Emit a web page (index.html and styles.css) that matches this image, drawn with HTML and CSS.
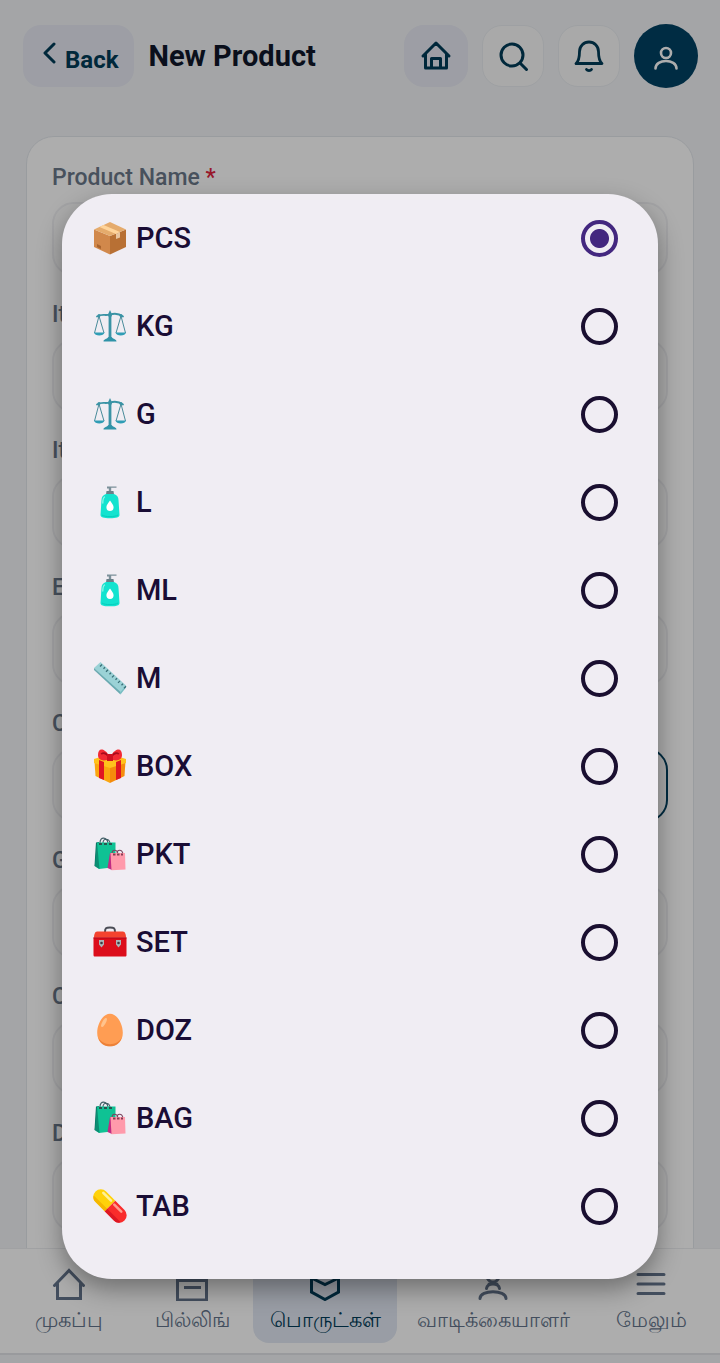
FILE: index.html
```html
<!DOCTYPE html>
<html lang="en">
<head>
<meta charset="utf-8">
<meta name="viewport" content="width=device-width, initial-scale=1">
<title>New Product</title>
<link rel="stylesheet" href="styles.css">
</head>
<body>
<svg class="defs" aria-hidden="true">
  <symbol id="scales" viewBox="0 0 34 34">
    <path d="M4 7.500C9 4.500 12 7 17 5.500S26 4.500 30 7.500" fill="none" stroke="#3a93a5" stroke-width="1.800" stroke-linecap="round"/>
    <path d="M6 7 1.500 24M6 7l5 17M28 7l-5 17M28 7l4.500 17" stroke="#498b9a" stroke-width="1" fill="none"/>
    <circle cx="6" cy="6.500" r="1.500" fill="#3a93a5"/><circle cx="28" cy="6.500" r="1.500" fill="#3a93a5"/>
    <path d="M1 23.500h10.500c-.5 4-10 4-10.500 0zM22.500 23.500H33c-.5 4-10 4-10.500 0z" fill="#2f9db5"/>
    <path d="M15.600 4 17 1l1.400 3v25h-2.800z" fill="#3a93a5"/><circle cx="17" cy="6" r="2" fill="#3a93a5"/>
    <path d="M10.500 32.500c0-2.500 3-2 5-4.500h3c2 2.500 5 2 5 4.500z" fill="#2f93a8"/>
  </symbol>
  <symbol id="bottle" viewBox="0 0 34 34">
    <path d="M14 1.500h9.500v1.300h-5.300V6h-2.400V3.500H14z" fill="#7b9099"/>
    <path d="M13.500 6h7l.5 3.500h-8z" fill="#698089"/>
    <path d="M13 9h8c3 1 4.500 3 4.500 6l1 15c.1 2.500-3 3.300-9.500 3.300S7.400 32.500 7.500 30l1-15c0-3 1.500-5 4.500-6z" fill="#13e3cf"/>
    <path d="M9 30c3 2.200 13 2.200 16 0" stroke="#06cdbb" stroke-width="1" fill="none"/>
    <path d="M11.500 12c-1.500 1-1.700 3-1.700 6" stroke="#8ff5e9" stroke-width="1.300" fill="none" stroke-linecap="round"/>
    <path d="M17 15.500c2 3 3.600 4.600 3.600 6.800a3.600 3.600 0 0 1-7.200 0c0-2.200 1.600-3.800 3.600-6.800z" fill="#fff"/>
  </symbol>
  <symbol id="bags" viewBox="0 0 34 34">
    <path d="M7 6c0-7 7-6 8 0M10 6c0-5 6-5 7 0" fill="none" stroke="#436068" stroke-width="1.200"/>
    <path d="M3 5.500 6 5v26l-4.500-2z" fill="#09705f"/>
    <path d="M4 5.500h18.500V30L6 32l-3-2z" fill="#0fc294"/>
    <path d="M4 5.500 6.500 32 1.800 29z" fill="#0c8d73"/>
    <path d="M6 7h14" stroke="#29554f" stroke-width="2" stroke-dasharray="3 2"/>
    <path d="M19 17c0-5 5-5 6 0M24 17c0-5 5-5 6 0" fill="none" stroke="#7b4660" stroke-width="1.200"/>
    <path d="m17 16-2.500 15 4.500 2V16z" fill="#c02b82"/>
    <path d="M17.500 16H32l.5 16.500-14 .8z" fill="#ff9aab"/>
    <path d="M20 17.500h10" stroke="#853c52" stroke-width="1.800" stroke-dasharray="2.500 1.500"/>
  </symbol>
</svg>

<div class="screen">
  <header class="topbar">
    <button class="back" type="button">
      <svg width="24" height="36" viewBox="0 0 24 36" fill="none" stroke="currentColor" stroke-width="3" stroke-linecap="round" stroke-linejoin="round" aria-hidden="true"><path d="M17 2 8 11l9 9"/></svg>
      Back
    </button>
    <h1 class="title">New Product</h1>
    <button class="tool tool-tint" type="button" aria-label="Home">
      <svg width="32" height="32" viewBox="0 0 32 32" fill="none" stroke="currentColor" stroke-width="3" stroke-linecap="round" stroke-linejoin="round"><path d="M3 16 16 3l13 13M5.500 14v14h21V14M11.500 28v-9.500h9V28"/></svg>
    </button>
    <button class="tool" type="button" aria-label="Search">
      <svg width="32" height="32" viewBox="0 0 32 32" fill="none" stroke="currentColor" stroke-width="3" stroke-linecap="round"><circle cx="15" cy="15" r="11"/><path d="m23 23 6.500 6.500"/></svg>
    </button>
    <button class="tool" type="button" aria-label="Notifications">
      <svg width="32" height="32" viewBox="0 0 32 32" fill="none" stroke="currentColor" stroke-width="2.800" stroke-linecap="round" stroke-linejoin="round"><path d="M3 23.500h26c-3-2.500-3.500-6-3.500-12a9.500 9.500 0 0 0-19 0c0 6-.5 9.500-3.500 12zM13.500 29.500c1 1.400 4 1.400 5 0"/></svg>
    </button>
    <button class="avatar" type="button" aria-label="Account">
      <svg width="32" height="32" viewBox="0 0 32 32" fill="none" stroke="currentColor" stroke-width="2.600" stroke-linecap="round"><circle cx="16" cy="13" r="5"/><path d="M5.500 28.500c0-10 21-10 21 0"/></svg>
    </button>
  </header>

  <main class="content">
    <form class="card">
      <div class="field"><label for="f1">Product Name <span class="req">*</span></label><input id="f1" type="text"></div>
      <div class="field"><label for="f2">It</label><input id="f2" type="text"></div>
      <div class="field"><label for="f3">It</label><input id="f3" type="text"></div>
      <div class="field"><label for="f4">E</label><input id="f4" type="text"></div>
      <div class="field"><label for="f5">C</label>
        <div class="pair"><input id="f5" type="text"><input class="active" type="text" aria-label="Unit"></div></div>
      <div class="field"><label for="f6">G</label><input id="f6" type="text"></div>
      <div class="field"><label for="f7">C</label><input id="f7" type="text"></div>
      <div class="field"><label for="f8">D</label><input id="f8" type="text"></div>
    </form>
  </main>

  <nav class="tabs" lang="ta">
    <a class="tab" href="#home">
      <svg width="34" height="34" viewBox="0 0 34 34" fill="none" stroke="currentColor" stroke-width="3" stroke-linecap="round"><path d="M2.500 18.500 17 3.500l14.500 15M5.500 16.500v15h23v-15"/></svg>
      <span>முகப்பு</span></a>
    <a class="tab" href="#billing">
      <svg width="34" height="34" viewBox="0 0 34 34" fill="none" stroke="currentColor" stroke-width="3"><path d="M2.500 4h29v29h-29zM2 13.500h30M9 20.500h17"/></svg>
      <span>பில்லிங்</span></a>
    <a class="tab current" href="#products" aria-current="page">
      <svg width="34" height="34" viewBox="0 0 34 34" fill="none" stroke="currentColor" stroke-width="3"><path d="m17 1 13.500 7v17L17 32.500 3.500 25V8zM3.500 11 17 17.500 30.500 11"/></svg>
      <span>பொருட்கள்</span></a>
    <a class="tab" href="#customers">
      <svg width="34" height="34" viewBox="0 0 34 34" fill="none" stroke="currentColor" stroke-width="3" stroke-linecap="round"><circle cx="17" cy="9" r="6"/><path d="M10.500 21.500c1-6 12-6 13 0M4 31.500c0-9 26-9 26 0M13 17h8"/></svg>
      <span>வாடிக்கையாளர்</span></a>
    <a class="tab" href="#more">
      <svg width="34" height="34" viewBox="0 0 34 34" fill="none" stroke="currentColor" stroke-width="3" stroke-linecap="round"><path d="M4 7.500h26M4 17h26M4 26.500h26"/></svg>
      <span>மேலும்</span></a>
  </nav>
</div>

<div class="scrim">
  <div class="dialog" role="dialog" aria-modal="true" aria-label="Unit">
    <label class="option">
      <svg class="glyph" viewBox="0 0 34 34"><path d="M1 8.500 17 15v18.500L1 26z" fill="#d1884b"/><path d="M33 8.500 17 15v18.500L33 26z" fill="#b87034"/><path d="M1 8.500 17 1l16 7.500L17 15z" fill="#e5ab6c"/><path d="m6.500 6 4-2L27 11l-4 2z" fill="#ffd49a"/><path d="m23 13 4-2v5.500L23 18z" fill="#e8c5a0"/><path d="m4 23 4 2v3l-4-2z" fill="#a9632d"/></svg>
      <span>PCS</span><input type="radio" name="unit" checked></label>
    <label class="option"><svg class="glyph"><use href="#scales"/></svg><span>KG</span><input type="radio" name="unit"></label>
    <label class="option"><svg class="glyph"><use href="#scales"/></svg><span>G</span><input type="radio" name="unit"></label>
    <label class="option"><svg class="glyph"><use href="#bottle"/></svg><span>L</span><input type="radio" name="unit"></label>
    <label class="option"><svg class="glyph"><use href="#bottle"/></svg><span>ML</span><input type="radio" name="unit"></label>
    <label class="option">
      <svg class="glyph" viewBox="0 0 34 34"><path d="M1 7 7.500 1 33 24.500 27.500 33z" fill="#9bd2d6"/><path d="m1 7 26.500 24v2.500L1 9z" fill="#69a9b0"/><path d="m27.500 31 5.500-6.500v2l-5.500 7z" fill="#78bdc3"/><path d="m9 3.500-2 2m5 .8-1.500 1.500m4.500 1-2 2m5 .9-1.500 1.500m4.500 1.200-2 2m5 .8-1.500 1.500m4.500 1.200-2 2m5 .8-1.500 1.500m4.500 1.100-2 2" stroke="#396d75" stroke-width="1.300"/></svg>
      <span>M</span><input type="radio" name="unit"></label>
    <label class="option">
      <svg class="glyph" viewBox="0 0 34 34"><path d="M1.500 12 17 17v17L2.500 27z" fill="#faa60f"/><path d="M32.500 12 17 17v17l14.500-7z" fill="#f58c0c"/><path d="m1 10 16-5 16 5v4l-16 5-16-5z" fill="#ffc21c"/><path d="m6 11 5 2v18l-5-2zM28 11l-5 2v18l5-2z" fill="#e01622"/><path d="M17 10C10 13 5 11 5 6S8-1 12 2c2 1 4 4 5 8z" fill="#f22a33"/><path d="M17 10c7 3 12 1 12-4s-3-7-7-4c-2 1-4 4-5 8z" fill="#f22a33"/><path d="M16 8c-2-3-5-5-8-3M18 8c2-3 5-5 8-3" stroke="#a80a1b" stroke-width="1.500" fill="none"/><path d="M14 5h6v7h-6z" fill="#cf1020"/></svg>
      <span>BOX</span><input type="radio" name="unit"></label>
    <label class="option"><svg class="glyph"><use href="#bags"/></svg><span>PKT</span><input type="radio" name="unit"></label>
    <label class="option">
      <svg class="glyph" viewBox="0 0 34 34"><path d="M12 7c0-4 1-4.500 5-4.500s5 .5 5 4.500" fill="none" stroke="#4a4c55" stroke-width="2"/><path d="M4 6.500h26c2 0 3 3 3 6H1c0-3 1-6 3-6z" fill="#f4432f"/><path d="M.5 12.500h33V30c0 1-.5 1.500-1.500 1.500H2c-1 0-1.500-.5-1.500-1.500z" fill="#dc0d1b"/><path d="M.5 13h33" stroke="#b50817" stroke-width="1"/><path d="M6 15h5v4.500l-2.500 3-2.500-3zM23 15h5v4.500l-2.500 3-2.500-3z" fill="#aab4b8"/><circle cx="8.500" cy="18" r="1.300" fill="#413b43"/><circle cx="25.500" cy="18" r="1.300" fill="#413b43"/></svg>
      <span>SET</span><input type="radio" name="unit"></label>
    <label class="option">
      <svg class="glyph" viewBox="0 0 34 34"><path d="M17 .8c7.500 0 12.800 10.500 12.800 19 0 8-5 13.500-12.800 13.500S4.200 27.800 4.200 19.800c0-8.500 5.300-19 12.800-19z" fill="#ff9d53"/><path d="M5 24c4 9 19 10 24 0-2 6-6 9.300-12 9.300S6.500 30 5 24z" fill="#ed8138"/><ellipse cx="11" cy="9.500" rx="1.800" ry="5" transform="rotate(28 11 9.500)" fill="#ffc38d"/></svg>
      <span>DOZ</span><input type="radio" name="unit"></label>
    <label class="option"><svg class="glyph"><use href="#bags"/></svg><span>BAG</span><input type="radio" name="unit"></label>
    <label class="option">
      <svg class="glyph" viewBox="0 0 34 34"><g transform="rotate(45 17 17)"><path d="M17 9.500H4a7.500 7.500 0 0 0 0 15h13z" fill="#ffd20a"/><path d="M17 9.500h13a7.500 7.500 0 0 1 0 15H17z" fill="#f92c2b"/><path d="M17 21h19c-1 2.300-3 3.500-6 3.500H17z" fill="#dd1723"/><path d="M17 21H-2c1 2.300 3 3.500 6 3.500h13z" fill="#f5b700"/><path d="M3 12.500h11" stroke="#fff19a" stroke-width="2.500" stroke-linecap="round"/><path d="M19 13h10" stroke="#ff9c8d" stroke-width="2.500" stroke-linecap="round"/></g></svg>
      <span>TAB</span><input type="radio" name="unit"></label>
  </div>
</div>
</body>
</html>
```
FILE: styles.css
```css
* { box-sizing: border-box; }

body {
  margin: 0;
  font-family: Roboto, "Noto Sans", sans-serif;
  background: #f2f4f7;
  color: #0f172a;
}

button, input { font: inherit; color: inherit; }

.defs { position: absolute; width: 0; height: 0; }

.screen {
  height: 100vh;
  display: flex;
  flex-direction: column;
  overflow: hidden;
}

.topbar {
  display: flex;
  align-items: center;
  gap: 14px;
  padding: 24px 22px 48px 23px;
}

.back {
  display: flex;
  align-items: center;
  gap: 4px;
  height: 62px;
  padding: 8px 16px 0 14px;
  border: 0;
  border-radius: 18px;
  background: #e7e9f3;
  color: #003b57;
  font-size: 24px;
  font-weight: 700;
}

.title {
  flex: 1;
  margin: 0;
  font-size: 29px;
  font-weight: 700;
  line-height: 36px;
}

.tool, .avatar {
  display: grid;
  place-items: center;
  width: 62px;
  height: 62px;
  padding: 0;
  border: 1px solid #e9ecf0;
  border-radius: 20px;
  background: #fafafa;
  color: #003b57;
}

.tool-tint {
  width: 64px;
  border-color: #e7e9f3;
  background: #e7e9f3;
}

.avatar {
  width: 64px;
  height: 64px;
  border: 0;
  border-radius: 50%;
  background: #004163;
  color: #fff;
}

.content {
  flex: 1;
  min-height: 0;
  overflow: hidden;
  padding: 0 26px;
}

.card {
  padding: 25px;
  border: 1px solid #e2e6eb;
  border-radius: 28px;
  background: #fff;
}

.field {
  display: flex;
  flex-direction: column;
  gap: 8px;
  padding-bottom: 22px;
}

.field:nth-child(odd) { padding-bottom: 23px; }

.field label {
  font-size: 23px;
  font-weight: 500;
  line-height: 32px;
  color: #6a7889;
}

.req { color: #e0263f; }

.field input {
  width: 100%;
  height: 74px;
  border: 2px solid #f0f1f3;
  border-radius: 22px;
  background: #fdfdfd;
}

.pair {
  display: grid;
  grid-template-columns: 1fr 1fr;
  gap: 16px;
}

.field .active { border-color: #00405f; }

.tabs {
  display: grid;
  grid-template-columns: 118fr 128fr 138fr 198fr 118fr;
  padding: 10px;
  border-top: 1px solid #eceef1;
  border-bottom: 2px solid #e2e3e8;
  margin-bottom: 8px;
  background: #fff;
}

.tab {
  display: flex;
  flex-direction: column;
  align-items: center;
  gap: 4px;
  padding: 8px 0;
  color: #64748b;
  font-size: 21px;
  font-weight: 500;
  line-height: 30px;
  white-space: nowrap;
  text-decoration: none;
}

.current {
  margin: 0 -3px;
  border-radius: 16px;
  background: #e2e8f3;
  color: #003b57;
}

.scrim {
  position: absolute;
  inset: 0;
  padding: 194px 62px 0;
  background: rgba(0, 0, 0, 0.32);
}

.dialog {
  padding-bottom: 29px;
  border-radius: 50px;
  background: #f0edf3;
  box-shadow: 0 10px 24px rgba(0, 0, 0, 0.36);
}

.option {
  display: flex;
  align-items: center;
  gap: 9px;
  height: 88px;
  padding: 0 40px 0 31px;
  color: #1a0d35;
  font-size: 29px;
  font-weight: 500;
}

.option span { flex: 1; }

.glyph { width: 34px; height: 34px; }

.option input {
  appearance: none;
  width: 37px;
  height: 37px;
  margin: 0;
  border: 4px solid #1a0f30;
  border-radius: 50%;
}

.option input:checked {
  border-color: #43277f;
  background: radial-gradient(circle, #43277f 9px, transparent 10px);
}
```
